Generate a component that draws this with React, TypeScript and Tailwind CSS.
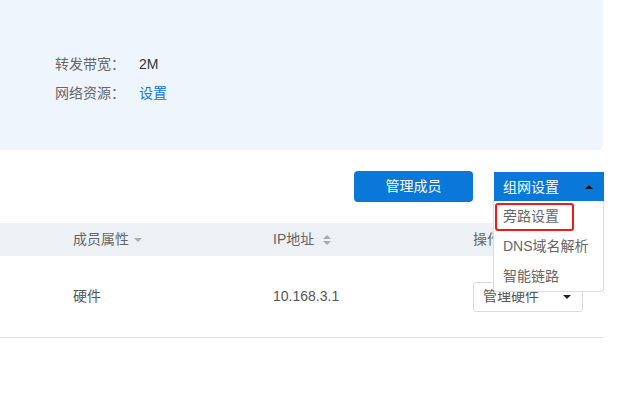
import { ReactNode } from "react";

const font = "font-['Liberation_Sans','Noto_Sans_CJK_SC',sans-serif]";

function InfoRow({ label, children }: { label: string; children: ReactNode }) {
  return (
    <div className="flex items-center h-[29px]">
      <span className="w-[84px] text-[#666]">{label}</span>
      {children}
    </div>
  );
}

function Caret({ up, color = "border-t-[#222]" }: { up?: boolean; color?: string }) {
  return up ? (
    <span className="inline-block w-0 h-0 border-x-[4px] border-x-transparent border-b-[4px] border-b-[#111]" />
  ) : (
    <span className={`inline-block w-0 h-0 border-x-[4px] border-x-transparent border-t-[4px] ${color}`} />
  );
}

export default function App() {
  return (
    <div className={`w-[621px] h-[402px] bg-white overflow-hidden text-[14px] ${font}`}>
      {/* summary panel */}
      <div className="w-[603px] h-[150px] bg-[#eef5fd] rounded-br-[5px] pl-[55px] pt-[50px]">
        <InfoRow label="转发带宽：">
          <span className="text-[#333]">2M</span>
        </InfoRow>
        <InfoRow label="网络资源：">
          <span className="text-[#0a78d6]">设置</span>
        </InfoRow>
      </div>

      {/* toolbar */}
      <div className="w-[604px] mt-[21px] flex justify-end gap-[21px] relative z-10">
        <button className="w-[119px] h-[31px] bg-[#0a78d8] text-white rounded-[4px]">管理成员</button>
        <div className="relative w-[110px] mt-[1px]">
          <div className="h-[30px] bg-[#0a78d8] text-white flex items-center justify-between pl-[9px] pr-[11px]">
            <span>组网设置</span>
            <Caret up />
          </div>
          <div className="absolute left-[-1px] top-[29px] w-[111px] bg-white border border-t-0 border-[#dcdcdc] rounded-b-[4px] text-[#666]">
            <div className="h-[30px] flex items-center pl-[9px]">旁路设置</div>
            <div className="h-[30px] flex items-center pl-[9px]">DNS域名解析</div>
            <div className="h-[30px] flex items-center pl-[9px]">智能链路</div>
            <div className="absolute left-[1px] top-[2px] w-[79px] h-[28px] border-2 border-[#f01818] rounded-[3px]" />
          </div>
        </div>
      </div>

      {/* table */}
      <div className="w-[603px] mt-[21px]">
        <div className="h-[33px] bg-[#edf0f5] grid grid-cols-[200px_200px_1fr] pl-[73px] items-center text-[#666]">
          <div className="flex items-center gap-[5px]">
            <span>成员属性</span>
            <Caret color="border-t-[#aaa]" />
          </div>
          <div className="flex items-center gap-[9px]">
            <span>IP地址</span>
            <span className="flex flex-col gap-[2px]">
              <span className="w-0 h-0 border-x-[4px] border-x-transparent border-b-[4px] border-b-[#aaa]" />
              <span className="w-0 h-0 border-x-[4px] border-x-transparent border-t-[4px] border-t-[#aaa]" />
            </span>
          </div>
          <div>操作</div>
        </div>
        <div className="h-[82px] border-b border-[#e3e3e3] grid grid-cols-[200px_200px_1fr] pl-[73px] items-center text-[#555]">
          <div>硬件</div>
          <div>10.168.3.1</div>
          <div>
            <div className="w-[110px] h-[30px] border border-[#dcdcdc] rounded-[3px] flex items-center justify-between pl-[9px] pr-[11px]">
              <span>管理硬件</span>
              <Caret />
            </div>
          </div>
        </div>
      </div>
    </div>
  );
}
